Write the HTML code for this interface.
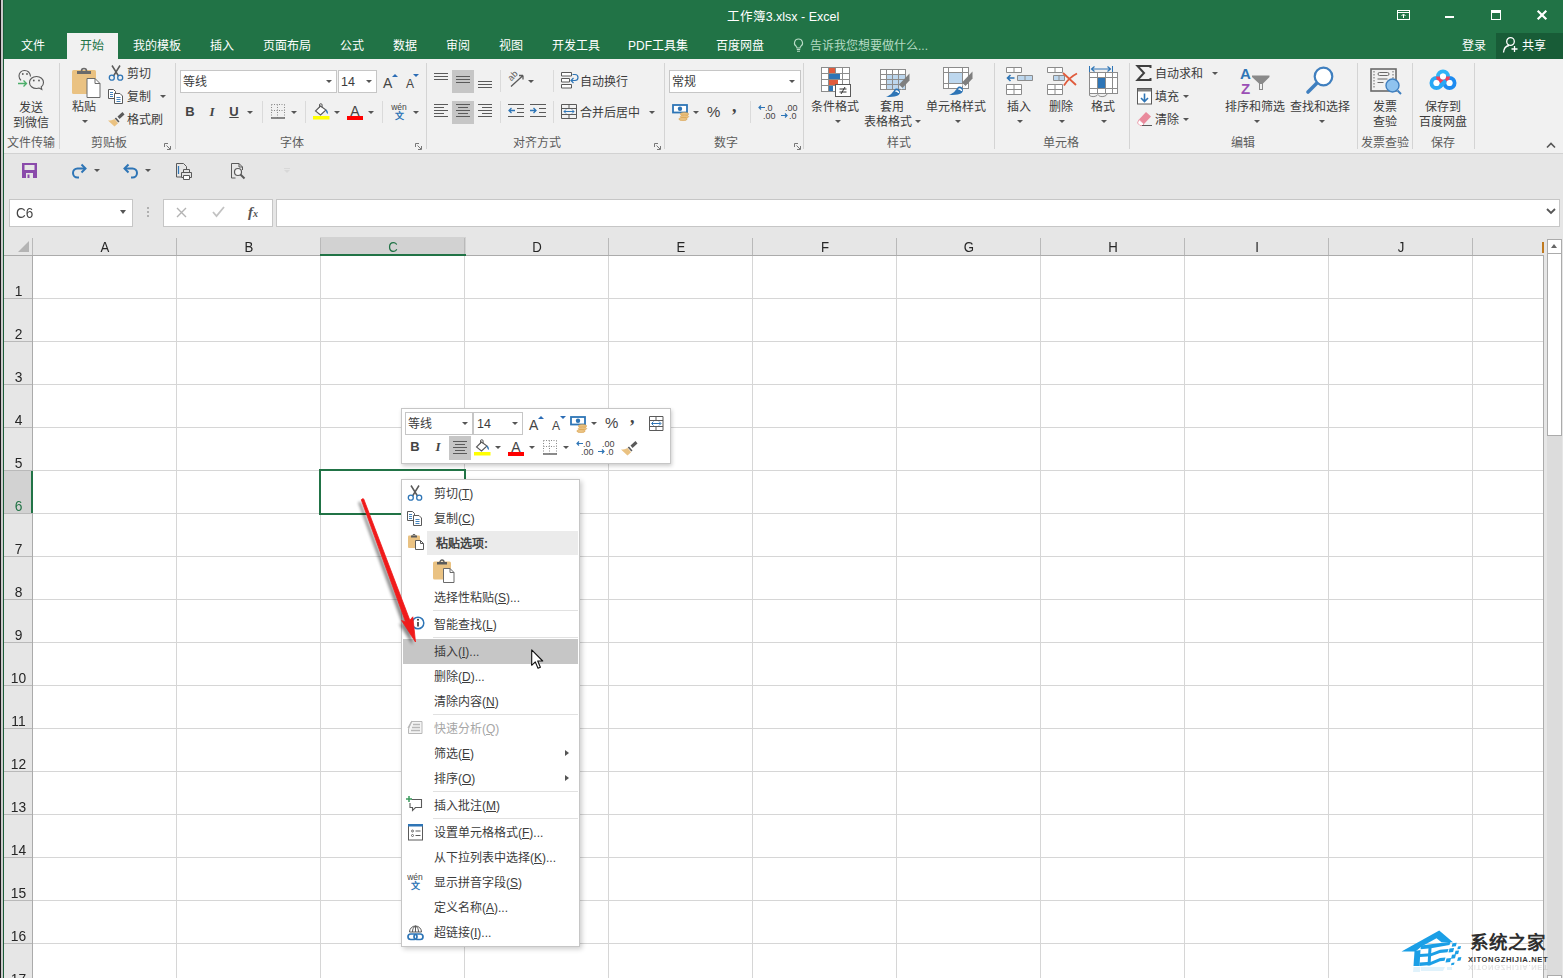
<!DOCTYPE html><html lang="zh-CN"><head>
<meta charset="utf-8">
<title>工作簿3.xlsx - Excel</title>
<style>
*{box-sizing:border-box;margin:0;padding:0}
html,body{width:1563px;height:978px;overflow:hidden;background:#fff}
body{position:relative;font-family:"Liberation Sans",sans-serif;font-size:12px;color:#3c3c3c}
.a{position:absolute;white-space:nowrap}
.t{position:absolute;white-space:nowrap;line-height:14px;height:14px;margin-top:1px}
.c{text-align:center}
svg{position:absolute;overflow:visible}
/* chrome */
#edge0{left:0;top:0;width:1px;height:978px;background:#1a1a1a}
#edge1{left:1px;top:0;width:2px;height:978px;background:#c9c9c9}
#edge2{left:3px;top:0;width:1px;height:978px;background:#1a5c38}
#title{left:4px;top:0;width:1559px;height:59px;background:#217346}
#ribbon{left:4px;top:59px;width:1559px;height:95px;background:#f1f1f1;border-bottom:1px solid #d2d2d2}
#qat{left:4px;top:154px;width:1559px;height:83px;background:#e6e6e6}
.tab{color:#fff;font-size:12px;top:38px}
.sep{position:absolute;width:1px;background:#d4d4d4}
.glab{color:#5a5a5a;top:136px}
.dd{position:absolute;width:0;height:0;border-left:3px solid transparent;border-right:3px solid transparent;border-top:3px solid #555}
/* grid */
#grid{left:33px;top:256px;width:1510px;height:722px;background:#fff}
.vl{position:absolute;top:256px;width:1px;height:722px;background:#d6d6d6}
.hl{position:absolute;left:33px;height:1px;width:1510px;background:#d6d6d6}
.ch{position:absolute;transform:scaleX(.88);top:238px;height:18px;font-size:15px;line-height:18px;text-align:center;width:144px}
.chs{position:absolute;top:243px;height:10px;width:1px;background:#b5b5b5}
.rh{position:absolute;transform:scaleX(.92);left:5px;width:27px;margin-top:2px;text-align:center;font-size:15px;line-height:16px;color:#262626}
.rhl{position:absolute;left:4px;width:28px;height:1px;background:#b9b9b9}
/* menu */
#menu{left:401px;top:479px;width:179px;height:468px;background:#fff;border:1px solid #c6c6c6;box-shadow:2px 2px 5px rgba(0,0,0,.2)}
.mi{position:absolute;left:434px;font-size:12px;line-height:14px;white-space:nowrap}
.msep{position:absolute;left:433px;width:145px;height:1px;background:#e1e1e1}
u{text-decoration:underline}
#mini{left:401px;top:408px;width:270px;height:56px;background:#fff;border:1px solid #c6c6c6;box-shadow:1px 2px 4px rgba(0,0,0,.2)}
</style>
</head>
<body>
<div class="a" id="title"></div>
<div class="a" id="ribbon"></div>
<div class="a" id="qat"></div>
<div class="a" id="edge0"></div><div class="a" id="edge1"></div><div class="a" id="edge2"></div>

<!--TITLEBAR-->
<div class="a" style="left:67px;top:33px;width:51px;height:26px;background:#f1f1f1"></div>
<div class="t" style="left: 80px; top: 38px; width: 24px; color: rgb(33, 115, 70); text-align: justify; text-align-last: justify;">开始</div>
<div class="t tab" style="left: 21px; width: 24px; text-align: justify; text-align-last: justify;">文件</div>
<div class="t tab" style="left: 133px; width: 48px; text-align: justify; text-align-last: justify;">我的模板</div>
<div class="t tab" style="left: 210px; width: 24px; text-align: justify; text-align-last: justify;">插入</div>
<div class="t tab" style="left: 263px; width: 48px; text-align: justify; text-align-last: justify;">页面布局</div>
<div class="t tab" style="left: 340px; width: 24px; text-align: justify; text-align-last: justify;">公式</div>
<div class="t tab" style="left: 393px; width: 24px; text-align: justify; text-align-last: justify;">数据</div>
<div class="t tab" style="left: 446px; width: 24px; text-align: justify; text-align-last: justify;">审阅</div>
<div class="t tab" style="left: 499px; width: 24px; text-align: justify; text-align-last: justify;">视图</div>
<div class="t tab" style="left: 552px; width: 48px; text-align: justify; text-align-last: justify;">开发工具</div>
<div class="t tab" style="left: 628px; width: 60px; text-align: justify; text-align-last: justify;">PDF工具集</div>
<div class="t tab" style="left: 716px; width: 48px; text-align: justify; text-align-last: justify;">百度网盘</div>
<div class="t" style="left: 726.67px; top: 9px; width: 112.65px; color: rgb(255, 255, 255); font-size: 12.5px; text-align: justify; text-align-last: justify;">工作簿3.xlsx - Excel</div>
<svg style="left:793px;top:38px" width="11" height="15" viewBox="0 0 11 15"><path d="M5.5 1a4 4 0 0 0-2.3 7.3c.5.5.8 1 .8 1.700h3c0-.7.3-1.200.8-1.700A4 4 0 0 0 5.500 1z" fill="none" stroke="#b9dcc7" stroke-width="1.100"></path><path d="M3.800 11.500h3.400M4 13.200h3" stroke="#b9dcc7" stroke-width="1.100"></path></svg>
<div class="t" style="left: 810px; top: 38px; color: rgb(180, 219, 195); width: 118.02px; text-align: justify; text-align-last: justify;">告诉我您想要做什么...</div>
<div class="t" style="left: 1462px; top: 38px; width: 24px; color: rgb(255, 255, 255); text-align: justify; text-align-last: justify;">登录</div>
<div class="a" style="left:1496px;top:33px;width:67px;height:26px;background:#185c37"></div>
<svg style="left:1502px;top:36px" width="18" height="18" viewBox="0 0 18 18"><circle cx="8.500" cy="5.500" r="3.800" fill="none" stroke="#fff" stroke-width="1.300"></circle><path d="M1.500 16.500c.3-4 2.500-6.500 5.500-7" fill="none" stroke="#fff" stroke-width="1.300"></path><path d="M12.500 10v6M9.500 13h6" stroke="#fff" stroke-width="1.300"></path></svg>
<div class="t" style="left: 1522px; top: 38px; color: rgb(255, 255, 255); width: 24px; text-align: justify; text-align-last: justify;">共享</div>
<svg style="left:1397px;top:10px" width="14" height="11" viewBox="0 0 14 11"><rect x=".5" y=".5" width="12" height="9" fill="none" stroke="#fff"></rect><path d="M.5 2.500h12" stroke="#fff"></path><path d="M6.500 8V4.500M4.500 6l2-2 2 2" fill="none" stroke="#fff"></path></svg>
<div class="a" style="left:1445px;top:16px;width:9px;height:2px;background:#fff"></div>
<div class="a" style="left:1491px;top:10px;width:10px;height:10px;border:1px solid #fff;border-top-width:3px"></div>
<svg style="left:1537px;top:10px" width="10" height="10" viewBox="0 0 10 10"><path d="M.7.700l8.600 8.600M9.300.700L.7 9.300" stroke="#fff" stroke-width="2.200"></path></svg>
<!--RIBBON-->
<div class="sep" style="left:59px;top:63px;height:86px"></div>
<div class="sep" style="left:175px;top:63px;height:86px"></div>
<div class="sep" style="left:426px;top:63px;height:86px"></div>
<div class="sep" style="left:664px;top:63px;height:86px"></div>
<div class="sep" style="left:803px;top:63px;height:86px"></div>
<div class="sep" style="left:994px;top:63px;height:86px"></div>
<div class="sep" style="left:1129px;top:63px;height:86px"></div>
<div class="sep" style="left:1357px;top:63px;height:86px"></div>
<div class="sep" style="left:1412px;top:63px;height:86px"></div>
<div class="sep" style="left:1474px;top:63px;height:86px"></div>
<div class="sep" style="left:262px;top:101px;height:22px;background:#dadada"></div>
<div class="sep" style="left:305px;top:101px;height:22px;background:#dadada"></div>
<div class="sep" style="left:382px;top:101px;height:22px;background:#dadada"></div>
<div class="sep" style="left:500px;top:70px;height:22px;background:#dadada"></div>
<div class="sep" style="left:500px;top:101px;height:22px;background:#dadada"></div>
<div class="sep" style="left:553px;top:70px;height:22px;background:#dadada"></div>
<div class="sep" style="left:553px;top:101px;height:22px;background:#dadada"></div>
<div class="sep" style="left:750px;top:101px;height:22px;background:#dadada"></div>
<div class="t" style="left: 7px; top: 135px; width: 48px; color: rgb(92, 92, 92); text-align: justify; text-align-last: justify;">文件传输</div>
<div class="t" style="left: 91px; top: 135px; width: 36px; color: rgb(92, 92, 92); text-align: justify; text-align-last: justify;">剪贴板</div>
<div class="t" style="left: 280px; top: 135px; width: 24px; color: rgb(92, 92, 92); text-align: justify; text-align-last: justify;">字体</div>
<div class="t" style="left: 513px; top: 135px; width: 48px; color: rgb(92, 92, 92); text-align: justify; text-align-last: justify;">对齐方式</div>
<div class="t" style="left: 714px; top: 135px; width: 24px; color: rgb(92, 92, 92); text-align: justify; text-align-last: justify;">数字</div>
<div class="t" style="left: 887px; top: 135px; width: 24px; color: rgb(92, 92, 92); text-align: justify; text-align-last: justify;">样式</div>
<div class="t" style="left: 1043px; top: 135px; width: 36px; color: rgb(92, 92, 92); text-align: justify; text-align-last: justify;">单元格</div>
<div class="t" style="left: 1231px; top: 135px; width: 24px; color: rgb(92, 92, 92); text-align: justify; text-align-last: justify;">编辑</div>
<div class="t" style="left: 1361px; top: 135px; width: 48px; color: rgb(92, 92, 92); text-align: justify; text-align-last: justify;">发票查验</div>
<div class="t" style="left: 1431px; top: 135px; width: 24px; color: rgb(92, 92, 92); text-align: justify; text-align-last: justify;">保存</div>
<svg style="left:164px;top:143px" width="7" height="7" viewBox="0 0 7 7"><path d="M.5 4V.5H4" fill="none" stroke="#777"></path><path d="M2.500 2.500L6 6M6.500 3v3.500H3" fill="none" stroke="#777"></path></svg>
<svg style="left:415px;top:143px" width="7" height="7" viewBox="0 0 7 7"><path d="M.5 4V.5H4" fill="none" stroke="#777"></path><path d="M2.500 2.500L6 6M6.500 3v3.500H3" fill="none" stroke="#777"></path></svg>
<svg style="left:654px;top:143px" width="7" height="7" viewBox="0 0 7 7"><path d="M.5 4V.5H4" fill="none" stroke="#777"></path><path d="M2.500 2.500L6 6M6.500 3v3.500H3" fill="none" stroke="#777"></path></svg>
<svg style="left:794px;top:143px" width="7" height="7" viewBox="0 0 7 7"><path d="M.5 4V.5H4" fill="none" stroke="#777"></path><path d="M2.500 2.500L6 6M6.500 3v3.500H3" fill="none" stroke="#777"></path></svg>
<div class="t" style="left: 19px; top: 100px; width: 24px; text-align: justify; text-align-last: justify;">发送</div>
<div class="t" style="left: 13px; top: 115px; width: 36px; text-align: justify; text-align-last: justify;">到微信</div>
<div class="t" style="left: 72px; top: 99px; width: 24px; text-align: justify; text-align-last: justify;">粘贴</div>
<div class="dd" style="left:82px;top:120px;border-top-color:#555"></div>
<div class="t" style="left: 127px; top: 66px; width: 24px; text-align: justify; text-align-last: justify;">剪切</div>
<div class="t" style="left: 127px; top: 89px; width: 24px; text-align: justify; text-align-last: justify;">复制</div>
<div class="dd" style="left:160px;top:95px;border-top-color:#555"></div>
<div class="t" style="left: 127px; top: 112px; width: 36px; text-align: justify; text-align-last: justify;">格式刷</div>
<div class="a" style="left:180px;top:70px;width:157px;height:23px;background:#fff;border:1px solid #c6c6c6"></div>
<div class="a" style="left:338px;top:70px;width:39px;height:23px;background:#fff;border:1px solid #c6c6c6"></div>
<div class="t" style="left: 183px; top: 74px; width: 24px; text-align: justify; text-align-last: justify;">等线</div>
<div class="t" style="left:341px;top:74px;font-size:12.500px">14</div>
<div class="dd" style="left:326px;top:80px;border-top-color:#555"></div>
<div class="dd" style="left:366px;top:80px;border-top-color:#555"></div>
<div class="t" style="left:383px;top:75px;font-size:14px;color:#444">A</div><div class="a" style="left:392px;top:74px;width:0;height:0;border-left:3px solid transparent;border-right:3px solid transparent;border-bottom:3.500px solid #2b6cb5"></div>
<div class="t" style="left:406px;top:76px;font-size:12px;color:#444">A</div><div class="a" style="left:413px;top:74px;width:0;height:0;border-left:3px solid transparent;border-right:3px solid transparent;border-top:3.500px solid #2b6cb5"></div>
<div class="t c" style="left:180px;top:104px;width:20px;font-weight:bold;font-size:13px;color:#444">B</div>
<div class="t c" style="left:202px;top:104px;width:20px;font-style:italic;font-size:13px;color:#444;font-family:'Liberation Serif',serif;font-weight:bold">I</div>
<div class="t c" style="left:224px;top:104px;width:20px;font-size:13px;color:#444;text-decoration:underline;font-weight:bold">U</div>
<div class="dd" style="left:247px;top:111px;border-top-color:#555"></div>
<div class="dd" style="left:291px;top:111px;border-top-color:#555"></div>
<div class="dd" style="left:334px;top:111px;border-top-color:#555"></div>
<div class="dd" style="left:368px;top:111px;border-top-color:#555"></div>
<div class="dd" style="left:413px;top:111px;border-top-color:#555"></div>
<div class="a" style="left:452px;top:70px;width:22px;height:23px;background:#c6c6c6"></div>
<div class="a" style="left:452px;top:101px;width:22px;height:23px;background:#c6c6c6"></div>
<div class="dd" style="left:528px;top:80px;border-top-color:#555"></div>
<div class="t" style="left: 580px; top: 74px; width: 48px; text-align: justify; text-align-last: justify;">自动换行</div>
<div class="t" style="left: 580px; top: 105px; width: 60px; text-align: justify; text-align-last: justify;">合并后居中</div>
<div class="dd" style="left:649px;top:111px;border-top-color:#555"></div>
<div class="a" style="left:669px;top:70px;width:132px;height:23px;background:#fff;border:1px solid #c6c6c6"></div>
<div class="t" style="left: 672px; top: 74px; width: 24px; text-align: justify; text-align-last: justify;">常规</div>
<div class="dd" style="left:789px;top:80px;border-top-color:#555"></div>
<div class="dd" style="left:693px;top:111px;border-top-color:#555"></div>
<div class="t" style="left:707px;top:104px;font-size:15px;color:#444">%</div>
<div class="t" style="left:732px;top:98px;font-size:18px;font-weight:bold;color:#444;font-family:'Liberation Serif',serif">,</div>
<div class="t" style="left: 811px; top: 99px; width: 48px; text-align: justify; text-align-last: justify;">条件格式</div>
<div class="dd" style="left:835px;top:120px;border-top-color:#555"></div>
<div class="t" style="left: 880px; top: 99px; width: 24px; text-align: justify; text-align-last: justify;">套用</div>
<div class="t" style="left: 864px; top: 114px; width: 48px; text-align: justify; text-align-last: justify;">表格格式</div>
<div class="dd" style="left:915px;top:120px;border-top-color:#555"></div>
<div class="t" style="left: 926px; top: 99px; width: 60px; text-align: justify; text-align-last: justify;">单元格样式</div>
<div class="dd" style="left:955px;top:120px;border-top-color:#555"></div>
<div class="t" style="left: 1007px; top: 99px; width: 24px; text-align: justify; text-align-last: justify;">插入</div>
<div class="dd" style="left:1017px;top:120px;border-top-color:#555"></div>
<div class="t" style="left: 1049px; top: 99px; width: 24px; text-align: justify; text-align-last: justify;">删除</div>
<div class="dd" style="left:1059px;top:120px;border-top-color:#555"></div>
<div class="t" style="left: 1091px; top: 99px; width: 24px; text-align: justify; text-align-last: justify;">格式</div>
<div class="dd" style="left:1101px;top:120px;border-top-color:#555"></div>
<div class="t" style="left: 1155px; top: 66px; width: 48px; text-align: justify; text-align-last: justify;">自动求和</div>
<div class="dd" style="left:1212px;top:72px;border-top-color:#555"></div>
<div class="t" style="left: 1155px; top: 89px; width: 24px; text-align: justify; text-align-last: justify;">填充</div>
<div class="dd" style="left:1183px;top:95px;border-top-color:#555"></div>
<div class="t" style="left: 1155px; top: 112px; width: 24px; text-align: justify; text-align-last: justify;">清除</div>
<div class="dd" style="left:1183px;top:118px;border-top-color:#555"></div>
<div class="t" style="left: 1225px; top: 99px; width: 60px; text-align: justify; text-align-last: justify;">排序和筛选</div>
<div class="dd" style="left:1254px;top:120px;border-top-color:#555"></div>
<div class="t" style="left: 1290px; top: 99px; width: 60px; text-align: justify; text-align-last: justify;">查找和选择</div>
<div class="dd" style="left:1319px;top:120px;border-top-color:#555"></div>
<div class="t" style="left: 1373px; top: 99px; width: 24px; text-align: justify; text-align-last: justify;">发票</div>
<div class="t" style="left: 1373px; top: 114px; width: 24px; text-align: justify; text-align-last: justify;">查验</div>
<div class="t" style="left: 1425px; top: 99px; width: 36px; text-align: justify; text-align-last: justify;">保存到</div>
<div class="t" style="left: 1419px; top: 114px; width: 48px; text-align: justify; text-align-last: justify;">百度网盘</div>
<svg style="left:1546px;top:142px" width="10" height="6" viewBox="0 0 10 6"><path d="M1 5.500l4-4 4 4" fill="none" stroke="#555" stroke-width="1.600"></path></svg>
<svg style="left:18px;top:69px" width="27" height="23" viewBox="0 0 27 23"><path d="M12.500 7.500C12 3.500 9.500 1.500 6.500 1.500 3.200 1.500 1 4 1 7c0 1.800.8 3.200 2 4.300" fill="none" stroke="#5a5a5a" stroke-width="1.100"></path><circle cx="4.800" cy="5" r=".9" fill="#5a5a5a"></circle><circle cx="9" cy="5" r=".9" fill="#5a5a5a"></circle><path d="M18.500 7.500c-4 0-7 2.600-7 6s3 6 7 6c.9 0 1.800-.1 2.600-.4l2.700 1.400-.6-2.500c1.500-1.100 2.300-2.700 2.300-4.500 0-3.400-3-6-7-6z" fill="#f1f1f1" stroke="#5a5a5a" stroke-width="1.100"></path><circle cx="15.800" cy="11.500" r=".9" fill="#5a5a5a"></circle><circle cx="21" cy="11.500" r=".9" fill="#5a5a5a"></circle><path d="M0 14.500h8M5.500 11.500l3 3-3 3" fill="none" stroke="#4caf6a" stroke-width="1.300"></path></svg>
<svg style="left:72px;top:66px" width="29" height="32" viewBox="0 0 29 32"><rect x="0" y="4" width="24" height="24" rx="1.500" fill="#eac282"></rect><path d="M5 5h14v3H5z" fill="#6a6a6a"></path><path d="M9.500 5a2.500 2.500 0 0 1 5 0" fill="none" stroke="#6a6a6a" stroke-width="1.600"></path><path d="M15 12.500h8l5 5V31.500H15z" fill="#fff" stroke="#6a6a6a" stroke-width="1"></path><path d="M23 12.500v5h5" fill="none" stroke="#6a6a6a"></path></svg>
<svg style="left:108px;top:65px" width="16" height="16" viewBox="0 0 16 16"><path d="M4 .5l6.500 10.500M12 .5L5.500 11" stroke="#5a5a5a" stroke-width="1.500" fill="none"></path><circle cx="3.800" cy="12.700" r="2.500" fill="none" stroke="#2e75b6" stroke-width="1.300"></circle><circle cx="12.200" cy="12.700" r="2.500" fill="none" stroke="#2e75b6" stroke-width="1.300"></circle></svg>
<svg style="left:108px;top:89px" width="16" height="15" viewBox="0 0 16 15"><path d="M.5.500h5l2 2V9.500h-7z" fill="#fff" stroke="#5a5a5a"></path><path d="M2 3.500h3M2 5.500h3M2 7.500h3" stroke="#2e75b6" stroke-width=".9"></path><path d="M6.500 4.500h5.500l2.500 2.500V14.500h-8z" fill="#fff" stroke="#5a5a5a"></path><path d="M8.500 8.500h4M8.500 10.500h4M8.500 12.500h4" stroke="#2e75b6" stroke-width=".9"></path></svg>
<svg style="left:108px;top:111px" width="17" height="16" viewBox="0 0 17 16"><path d="M9.500 5.500l5-4.500 2 2.500-5 4.500z" fill="#5a5a5a"></path><path d="M8 6.500l3.500 4-1.200 1.100-3.600-4z" fill="#5a5a5a"></path><path d="M6.500 8l3.600 4.200L6.500 15.500 0 9.500c2.500 0 4.500-.2 6.500-1.500z" fill="#eac282"></path></svg>
<svg style="left:271px;top:104px" width="14" height="15" viewBox="0 0 14 15"><path d="M.5.500h13M.5 6.500h13M.5.500v13M6.500.500v13M13.500.500v13" stroke="#8a8a8a" stroke-dasharray="1 1.500" fill="none"></path><path d="M0 14h14" stroke="#5a5a5a" stroke-width="1.400"></path></svg>
<svg style="left:313px;top:103px" width="17" height="17" viewBox="0 0 17 17"><rect x="0" y="13" width="16.500" height="3.500" fill="#ffff00"></rect><path d="M7.500 3L2.500 8l5 4 5.500-5z" fill="#fff" stroke="#5a5a5a" stroke-width="1.100"></path><path d="M6.500 4.500V2a1.300 1.300 0 0 1 2.600 0v2.500" fill="none" stroke="#5a5a5a" stroke-width="1"></path><path d="M12.500 6.500c1.800.5 2.800 2 2.300 4.500-1-.2-1.600-1.800-2.300-4.500z" fill="#2e75b6"></path></svg>
<div class="t c" style="left:345px;top:103px;width:20px;font-size:14px;color:#444">A</div><div class="a" style="left:347px;top:116px;width:16px;height:4px;background:#ff0000"></div>
<div class="t c" style="left:384px;top:101px;width:30px;font-size:8.500px;color:#444;line-height:10px">wén</div><div class="t" style="left: 394.5px; top: 109px; width: 9px; font-size: 9px; color: rgb(46, 117, 182); line-height: 12px; font-weight: bold; text-align: justify; text-align-last: justify;">文</div>
<svg style="left:434px;top:73px" width="14" height="9" viewBox="0 0 14 9"><path d="M0 0.5h14" stroke="#5a5a5a"></path><path d="M0 3.5h14" stroke="#5a5a5a"></path><path d="M0 6.5h14" stroke="#5a5a5a"></path></svg>
<svg style="left:456px;top:76px" width="14" height="9" viewBox="0 0 14 9"><path d="M0 0.5h14" stroke="#5a5a5a"></path><path d="M0 3.5h14" stroke="#5a5a5a"></path><path d="M0 6.5h14" stroke="#5a5a5a"></path></svg>
<svg style="left:478px;top:81px" width="14" height="9" viewBox="0 0 14 9"><path d="M0 0.5h14" stroke="#5a5a5a"></path><path d="M0 3.5h14" stroke="#5a5a5a"></path><path d="M0 6.5h14" stroke="#5a5a5a"></path></svg>
<svg style="left:434px;top:104px" width="14" height="15" viewBox="0 0 14 15"><path d="M0 0.5h14" stroke="#5a5a5a"></path><path d="M0 3.5h10" stroke="#5a5a5a"></path><path d="M0 6.5h14" stroke="#5a5a5a"></path><path d="M0 9.5h10" stroke="#5a5a5a"></path><path d="M0 12.5h14" stroke="#5a5a5a"></path></svg>
<svg style="left:456px;top:104px" width="14" height="15" viewBox="0 0 14 15"><path d="M0.0 0.5h14" stroke="#5a5a5a"></path><path d="M2.0 3.5h10" stroke="#5a5a5a"></path><path d="M0.0 6.5h14" stroke="#5a5a5a"></path><path d="M2.0 9.5h10" stroke="#5a5a5a"></path><path d="M0.0 12.5h14" stroke="#5a5a5a"></path></svg>
<svg style="left:478px;top:104px" width="14" height="15" viewBox="0 0 14 15"><path d="M0 0.5h14" stroke="#5a5a5a"></path><path d="M4 3.5h10" stroke="#5a5a5a"></path><path d="M0 6.5h14" stroke="#5a5a5a"></path><path d="M4 9.5h10" stroke="#5a5a5a"></path><path d="M0 12.5h14" stroke="#5a5a5a"></path></svg>
<svg style="left:508px;top:71px" width="18" height="18" viewBox="0 0 18 18"><text x="3" y="8" font-size="9" font-family="Liberation Sans" fill="#5a5a5a" transform="rotate(-45 6 9)">ab</text><path d="M3 15.500L15 4.500M15 4.500h-4M15 4.500v4" stroke="#5a5a5a" stroke-width="1.300" fill="none"></path></svg>
<svg style="left:561px;top:72px" width="17" height="17" viewBox="0 0 17 17"><path d="M.5.500h10v3.500H.5zM.5 6.500h8v3.500h-8zM.5 12.500h10v3.500H.5z" fill="#fff" stroke="#5a5a5a"></path><path d="M11.500 2.500h2.500a2.200 2.200 0 0 1 0 6h-3.500M12.500 6l-2.500 2.500 2.500 2.500" fill="none" stroke="#2e75b6" stroke-width="1.200"></path></svg>
<svg style="left:508px;top:104px" width="17" height="15" viewBox="0 0 17 15"><path d="M0 .5h16M9 4.500h7M9 8.500h7M0 12.500h16" stroke="#5a5a5a"></path><path d="M7 6.500H1M3.500 4L1 6.500 3.500 9" fill="none" stroke="#2e75b6" stroke-width="1.300"></path></svg>
<svg style="left:530px;top:104px" width="17" height="15" viewBox="0 0 17 15"><path d="M0 .5h16M9 4.500h7M9 8.500h7M0 12.500h16" stroke="#5a5a5a"></path><path d="M0 6.500h6M3.500 4L6 6.500 3.500 9" fill="none" stroke="#2e75b6" stroke-width="1.300"></path></svg>
<svg style="left:561px;top:104px" width="17" height="16" viewBox="0 0 17 16"><path d="M.5.500h15v14H.5zM.5 4.500h15M.5 10.500h15M8 .5v4M8 10.500v4" fill="none" stroke="#5a5a5a"></path><path d="M3 7.500h10M5 5.500L3 7.500l2 2M11 5.500l2 2-2 2" fill="none" stroke="#2e75b6" stroke-width="1"></path></svg>
<svg style="left:672px;top:104px" width="18" height="20" viewBox="0 0 18 20"><rect x="1" y="1" width="14" height="7.500" fill="#fff" stroke="#2e75b6" stroke-width="1.800"></rect><circle cx="8" cy="4.800" r="2.200" fill="#2e75b6"></circle><ellipse cx="12.500" cy="10" rx="4.200" ry="1.600" fill="#eac282" stroke="#d9a04a" stroke-width=".6"></ellipse><ellipse cx="12.500" cy="12.500" rx="4.200" ry="1.600" fill="#eac282" stroke="#d9a04a" stroke-width=".6"></ellipse><ellipse cx="11" cy="15" rx="4.200" ry="1.600" fill="#eac282" stroke="#d9a04a" stroke-width=".6"></ellipse></svg>
<div class="t" style="left:765px;top:103px;font-size:9px;line-height:8px;color:#444">.0</div><div class="t" style="left:763px;top:111px;font-size:9px;line-height:8px;color:#444">.00</div>
<svg style="left:758px;top:105px" width="8" height="6" viewBox="0 0 8 6"><path d="M7 2.500H1M3 .5L1 2.500l2 2" fill="none" stroke="#2e75b6" stroke-width="1.200"></path></svg>
<div class="t" style="left:785px;top:103px;font-size:9px;line-height:8px;color:#444">.00</div><div class="t" style="left:789px;top:111px;font-size:9px;line-height:8px;color:#444">.0</div>
<svg style="left:781px;top:113px" width="8" height="6" viewBox="0 0 8 6"><path d="M0 2.500h6M4 .5l2 2-2 2" fill="none" stroke="#2e75b6" stroke-width="1.200"></path></svg>
<svg style="left:821px;top:67px" width="31" height="31" viewBox="0 0 31 31"><rect x=".5" y=".5" width="28" height="24" fill="#fff" stroke="#8c8c8c"></rect><path d="M7.500.5v24M14.500.5v24M21.500.5v24M.5 6.500h28M.5 12.500h28M.5 18.500h28" stroke="#8c8c8c" fill="none"></path><rect x="8" y="1" width="6" height="5" fill="#e05b3c"></rect><rect x="8" y="7" width="11" height="5" fill="#2e75b6"></rect><rect x="8" y="13" width="9" height="5" fill="#e05b3c"></rect><rect x="8" y="19" width="4" height="5" fill="#2e75b6"></rect><rect x="14.500" y="17.500" width="15" height="12" fill="#fff" stroke="#5a5a5a"></rect><path d="M18.500 22h7M18.500 25h7M24 20l-4 7" stroke="#333" stroke-width="1" fill="none"></path></svg>
<svg style="left:880px;top:69px" width="31" height="29" viewBox="0 0 31 29"><rect x=".5" y=".5" width="25" height="20" fill="#fff" stroke="#8c8c8c"></rect><rect x="7" y="6" width="18" height="14" fill="#bdd7ee"></rect><path d="M6.500.5v20M12.500.5v20M18.500.5v20M.5 5.500h25M.5 10.500h25M.5 15.500h25" stroke="#8c8c8c" fill="none"></path><path d="M29.500 4.500L19 15.500l3.500 3.500 7-7.500z" fill="#7f7f7f"></path><path d="M19.500 17.500l2.500 2.500" stroke="#f1f1f1" stroke-width="1.200"></path><path d="M6 28c5-2 7-5 9-8 2.500-1.500 5.500.5 5 3.500-.8 3.500-4 4.500-14 4.500z" fill="#2e75b6"></path><path d="M15.500 22.500c1.500-1 3 0 3 1.500" stroke="#fff" stroke-width="1.500" fill="none"></path></svg>
<svg style="left:943px;top:67px" width="31" height="29" viewBox="0 0 31 29"><rect x=".5" y=".5" width="25" height="21" fill="#fff" stroke="#8c8c8c"></rect><path d="M5.500.5v21M19.500.5v21M.5 5.500h25M.5 16.500h25" stroke="#8c8c8c" fill="none"></path><rect x="6" y="6" width="13" height="10" fill="#bdd7ee"></rect><path d="M29.500 4.500L19 15.500l3.500 3.500 7-7.500z" fill="#7f7f7f"></path><path d="M19.500 17.500l2.500 2.500" stroke="#f1f1f1" stroke-width="1.200"></path><path d="M6 28c5-2 7-5 9-8 2.500-1.500 5.500.5 5 3.500-.8 3.500-4 4.500-14 4.500z" fill="#2e75b6"></path><path d="M15.500 22.500c1.500-1 3 0 3 1.500" stroke="#fff" stroke-width="1.500" fill="none"></path></svg>
<svg style="left:1006px;top:67px" width="27" height="28" viewBox="0 0 27 28"><path d="M.5.500h15v5H.5zM8 .5v5" fill="#fff" stroke="#8c8c8c"></path><path d="M11.500 8.500h15v5h-15z" fill="#bdd7ee" stroke="#8c8c8c"></path><path d="M19 8.500v5" stroke="#8c8c8c"></path><path d="M.5 17.500h15v10H.5zM8 17.500v10M.5 22.500h15" fill="#fff" stroke="#8c8c8c"></path><path d="M8.500 11H1.500M4.500 8L1.500 11l3 3" fill="none" stroke="#2e75b6" stroke-width="1.600"></path></svg>
<svg style="left:1047px;top:67px" width="31" height="28" viewBox="0 0 31 28"><path d="M.5.500h15v5H.5zM8 .5v5" fill="#fff" stroke="#8c8c8c"></path><path d="M6.500 8.500h11v5h-11z" fill="#bdd7ee" stroke="#8c8c8c"></path><path d="M12 8.500v5" stroke="#8c8c8c"></path><path d="M.5 17.500h15v10H.5zM8 17.500v10M.5 22.500h15" fill="#fff" stroke="#8c8c8c"></path><path d="M16 6l13 12M30 6.500c-6 3-10 7-13 12" fill="none" stroke="#e05b3c" stroke-width="1.800"></path></svg>
<svg style="left:1089px;top:65px" width="30" height="33" viewBox="0 0 30 33"><path d="M.5 1v6M23.500 1v6" stroke="#2e75b6"></path><path d="M2.500 4h19M5.500 1.500L2.500 4l3 2.500M18.500 1.500l3 2.500-3 2.500" fill="none" stroke="#2e75b6" stroke-width="1.200"></path><rect x=".5" y="7.500" width="28" height="21" fill="#fff" stroke="#8c8c8c"></rect><path d="M8.500 7.500v21M16.500 7.500v21M23.500 7.500v21M.5 12.500h28M.5 23.500h28" stroke="#8c8c8c" fill="none"></path><rect x="9" y="13" width="7" height="10" fill="#2e75b6"></rect><path d="M.5 28.500v2c2 1.500 5 1.500 7.500 0 1-.8 1-1.500 1.500-2M9.500 30.500c2 1.500 5 1.500 7.500 0l1.500-2" fill="none" stroke="#8c8c8c"></path></svg>
<svg style="left:1136px;top:65px" width="16" height="16" viewBox="0 0 16 16"><path d="M14.500 3V1H1.500l6.500 7-6.500 7h13v-2" fill="none" stroke="#404040" stroke-width="2"></path></svg>
<svg style="left:1137px;top:88px" width="15" height="17" viewBox="0 0 15 17"><rect x=".5" y=".5" width="14" height="15.500" fill="#fff" stroke="#5a5a5a"></rect><rect x="1" y="1" width="13" height="2.500" fill="#7f7f7f"></rect><path d="M7.500 5.500v8M4 10l3.500 3.500L11 10" fill="none" stroke="#2e75b6" stroke-width="1.600"></path></svg>
<svg style="left:1137px;top:111px" width="16" height="15" viewBox="0 0 16 15"><path d="M9 1l5 4.500-7 7.500-5-4.500z" fill="#e98a9c"></path><path d="M2 8.500l5 4.500-1.500 1.500H3L.5 12z" fill="#fff" stroke="#e98a9c" stroke-width=".8"></path><path d="M5 14.500h10" stroke="#5a5a5a"></path></svg>
<div class="t" style="left:1240px;top:65px;font-size:15px;line-height:15px;height:15px;font-weight:bold;color:#2e75b6">A</div><div class="t" style="left:1241px;top:80px;font-size:15px;line-height:15px;height:15px;font-weight:bold;color:#9b4fb5">Z</div>
<svg style="left:1252px;top:75px" width="18" height="16" viewBox="0 0 18 16"><path d="M0 .5h17.500v1.500L11 8.500V15H7V8.500L0 2z" fill="#8a8a8a"></path><path d="M8 9v5h2V9z" fill="#f1f1f1"></path></svg>
<svg style="left:1305px;top:65px" width="30" height="30" viewBox="0 0 30 30"><circle cx="18.500" cy="11.500" r="8.800" fill="#fff" stroke="#3f7fbf" stroke-width="2.200"></circle><path d="M11.500 18.500L3 27" stroke="#3f7fbf" stroke-width="3.600" stroke-linecap="round"></path></svg>
<svg style="left:1370px;top:68px" width="32" height="28" viewBox="0 0 32 28"><rect x="1" y="1" width="25" height="22" fill="#f1f1f1" stroke="#6a6a6a" stroke-width="1.600"></rect><path d="M4 3v18" stroke="#6a6a6a" stroke-dasharray="1.500 1.500"></path><path d="M23 3v8" stroke="#6a6a6a" stroke-dasharray="1.500 1.500"></path><rect x="8" y="4.500" width="11" height="3" rx="1.500" fill="none" stroke="#6a6a6a"></rect><path d="M7.500 11h10M7.500 14.500h6" stroke="#6a6a6a" stroke-width="1.200"></path><circle cx="22.500" cy="17.500" r="6.500" fill="#8fc3ef" stroke="#3f7fbf" stroke-width="1.400"></circle><path d="M27.500 22.500l3.500 3.500" stroke="#3f7fbf" stroke-width="2"></path></svg>
<svg style="left:1429px;top:69px" width="28" height="22" viewBox="0 0 28 22"><circle cx="7.500" cy="14" r="5" fill="none" stroke="#2aa8f5" stroke-width="4"></circle><circle cx="20.500" cy="14" r="5" fill="none" stroke="#1e8bf0" stroke-width="4"></circle><circle cx="14" cy="7.500" r="5" fill="none" stroke="#2fb4f7" stroke-width="4"></circle><path d="M9 7.500a5 5 0 0 0 10 0" fill="none" stroke="#f0405a" stroke-width="4"></path><path d="M11 17.500l6-6" stroke="#2aa8f5" stroke-width="4"></path><circle cx="7.500" cy="14" r="3" fill="#fff"></circle><circle cx="20.500" cy="14" r="3" fill="#fff"></circle><circle cx="14" cy="7.500" r="3" fill="#fff"></circle></svg>
<!--RIBBONICONS3-->
<!--QAT-->
<svg style="left:22px;top:163px" width="15" height="15" viewBox="0 0 15 15"><path d="M0 0h15v15H0z" fill="#8a4bab"></path><rect x="2.500" y="2" width="10" height="5" fill="#e6e6e6"></rect><rect x="4" y="10" width="7" height="5" fill="#e6e6e6"></rect><rect x="5.500" y="11.500" width="2" height="3.500" fill="#8a4bab"></rect></svg>
<svg style="left:71px;top:163px" width="16" height="15" viewBox="0 0 16 15"><path d="M14 5.500H6.500a4.500 4.500 0 0 0 0 9H8" fill="none" stroke="#2e75b6" stroke-width="2"></path><path d="M10.500 1.500l4 4-4 4" fill="none" stroke="#2e75b6" stroke-width="2"></path></svg>
<div class="dd" style="left:94px;top:169px;border-top-color:#555"></div>
<svg style="left:123px;top:163px" width="16" height="15" viewBox="0 0 16 15"><path d="M2 5.500h7.500a4.500 4.500 0 0 1 0 9H8" fill="none" stroke="#2e75b6" stroke-width="2"></path><path d="M5.500 1.500l-4 4 4 4" fill="none" stroke="#2e75b6" stroke-width="2"></path></svg>
<div class="dd" style="left:145px;top:169px;border-top-color:#555"></div>
<svg style="left:176px;top:163px" width="17" height="17" viewBox="0 0 17 17"><path d="M.5.500h7l3 3V6M.5.500v13.500h5" fill="none" stroke="#5a5a5a"></path><path d="M2.500 3v8" stroke="#2e75b6" stroke-width="1.200"></path><path d="M7.500 9.500V6.500h6v3M5.500 9.500h10v5h-10z" fill="#e6e6e6" stroke="#5a5a5a"></path><path d="M7.500 12.500h6v4h-6z" fill="#fff" stroke="#5a5a5a"></path></svg>
<svg style="left:231px;top:163px" width="15" height="17" viewBox="0 0 15 17"><path d="M.5.500h7.500l3.500 3.500v3M.5.500v14.500h4" fill="none" stroke="#5a5a5a"></path><path d="M8 .5v3.500h3.500" fill="none" stroke="#5a5a5a"></path><circle cx="7" cy="9" r="3.500" fill="#f4f4f4" stroke="#5a5a5a" stroke-width="1.200"></circle><path d="M9.500 11.500l4 4" stroke="#5a5a5a" stroke-width="2"></path></svg>
<div class="a" style="left:284px;top:168px;width:6px;height:1px;background:#d8d8d8"></div><div class="dd" style="left:284px;top:170px;border-top-color:#d8d8d8"></div>
<div class="a" style="left:9px;top:199px;width:124px;height:28px;background:#fff;border:1px solid #c6c6c6"></div>
<div class="t" style="left:16px;top:203px;font-size:15px;line-height:18px;height:18px;color:#444;transform:scaleX(.9);transform-origin:0 50%">C6</div>
<div class="a" style="left:120px;top:210px;width:0;height:0;border-left:3.500px solid transparent;border-right:3.500px solid transparent;border-top:4px solid #555"></div>
<div class="a" style="left:147px;top:207px;width:2px;height:2px;background:#b0b0b0;box-shadow:0 4px 0 #b0b0b0,0 8px 0 #b0b0b0"></div>
<div class="a" style="left:163px;top:199px;width:110px;height:28px;background:#fff;border:1px solid #c6c6c6"></div>
<svg style="left:176px;top:207px" width="11" height="11" viewBox="0 0 11 11"><path d="M1 1l9 9M10 1l-9 9" stroke="#b3b3b3" stroke-width="1.400"></path></svg>
<svg style="left:212px;top:206px" width="13" height="11" viewBox="0 0 13 11"><path d="M1 6l3.500 4L12 1" fill="none" stroke="#c2c2c2" stroke-width="1.800"></path></svg>
<div class="t" style="left:248px;top:203px;font-size:15px;line-height:16px;height:16px;font-family:'Liberation Serif',serif;font-style:italic;font-weight:bold;color:#555">f<span style="font-size:10px">x</span></div>
<div class="a" style="left:276px;top:199px;width:1284px;height:28px;background:#fff;border:1px solid #c6c6c6"></div>
<svg style="left:1546px;top:208px" width="10" height="7" viewBox="0 0 10 7"><path d="M1 1l4 4 4-4" fill="none" stroke="#555" stroke-width="1.800"></path></svg>
<!--GRID-->
<div class="a" style="left:4px;top:237px;width:1540px;height:19px;background:#e6e6e6"></div>
<div class="a" style="left:320px;top:237px;width:146px;height:19px;background:#d2d2d2"></div>
<div class="a" style="left:4px;top:256px;width:29px;height:722px;background:#e6e6e6"></div>
<div class="a" id="grid"></div>
<div class="a" style="left:4px;top:471px;width:29px;height:42px;background:#d2d2d2;border-right:2px solid #217346"></div>
<div class="ch" style="left:33px;color:#262626">A</div>
<div class="ch" style="left:177px;color:#262626">B</div>
<div class="ch" style="left:321px;color:#217346">C</div>
<div class="ch" style="left:465px;color:#262626">D</div>
<div class="ch" style="left:609px;color:#262626">E</div>
<div class="ch" style="left:753px;color:#262626">F</div>
<div class="ch" style="left:897px;color:#262626">G</div>
<div class="ch" style="left:1041px;color:#262626">H</div>
<div class="ch" style="left:1185px;color:#262626">I</div>
<div class="ch" style="left:1329px;color:#262626">J</div>
<div class="a" style="left:32px;top:238px;width:1px;height:17px;background:#b9b9b9"></div>
<div class="a" style="left:176px;top:238px;width:1px;height:17px;background:#b9b9b9"></div>
<div class="vl" style="left:176px"></div>
<div class="a" style="left:320px;top:238px;width:1px;height:17px;background:#b9b9b9"></div>
<div class="vl" style="left:320px"></div>
<div class="a" style="left:464px;top:238px;width:1px;height:17px;background:#b9b9b9"></div>
<div class="vl" style="left:464px"></div>
<div class="a" style="left:608px;top:238px;width:1px;height:17px;background:#b9b9b9"></div>
<div class="vl" style="left:608px"></div>
<div class="a" style="left:752px;top:238px;width:1px;height:17px;background:#b9b9b9"></div>
<div class="vl" style="left:752px"></div>
<div class="a" style="left:896px;top:238px;width:1px;height:17px;background:#b9b9b9"></div>
<div class="vl" style="left:896px"></div>
<div class="a" style="left:1040px;top:238px;width:1px;height:17px;background:#b9b9b9"></div>
<div class="vl" style="left:1040px"></div>
<div class="a" style="left:1184px;top:238px;width:1px;height:17px;background:#b9b9b9"></div>
<div class="vl" style="left:1184px"></div>
<div class="a" style="left:1328px;top:238px;width:1px;height:17px;background:#b9b9b9"></div>
<div class="vl" style="left:1328px"></div>
<div class="a" style="left:1472px;top:238px;width:1px;height:17px;background:#b9b9b9"></div>
<div class="vl" style="left:1472px"></div>
<div class="a" style="left:1542px;top:242px;width:1.500px;height:11px;background:#c07a20"></div>
<div class="a" style="left:4px;top:255px;width:1540px;height:1px;background:#ababab"></div>
<div class="a" style="left:32px;top:256px;width:1px;height:722px;background:#ababab"></div>
<div class="a" style="left:1543px;top:256px;width:1px;height:722px;background:#ababab"></div>
<svg style="left:18px;top:241px" width="12" height="11" viewBox="0 0 12 11"><path d="M11 0v11H0z" fill="#b4b4b4"></path></svg>
<div class="hl" style="top:298px"></div>
<div class="rhl" style="top:298px"></div>
<div class="rh" style="top:281px;color:#262626">1</div>
<div class="hl" style="top:341px"></div>
<div class="rhl" style="top:341px"></div>
<div class="rh" style="top:324px;color:#262626">2</div>
<div class="hl" style="top:384px"></div>
<div class="rhl" style="top:384px"></div>
<div class="rh" style="top:367px;color:#262626">3</div>
<div class="hl" style="top:427px"></div>
<div class="rhl" style="top:427px"></div>
<div class="rh" style="top:410px;color:#262626">4</div>
<div class="hl" style="top:470px"></div>
<div class="rhl" style="top:470px"></div>
<div class="rh" style="top:453px;color:#262626">5</div>
<div class="hl" style="top:513px"></div>
<div class="rhl" style="top:513px"></div>
<div class="rh" style="top:496px;color:#217346">6</div>
<div class="hl" style="top:556px"></div>
<div class="rhl" style="top:556px"></div>
<div class="rh" style="top:539px;color:#262626">7</div>
<div class="hl" style="top:599px"></div>
<div class="rhl" style="top:599px"></div>
<div class="rh" style="top:582px;color:#262626">8</div>
<div class="hl" style="top:642px"></div>
<div class="rhl" style="top:642px"></div>
<div class="rh" style="top:625px;color:#262626">9</div>
<div class="hl" style="top:685px"></div>
<div class="rhl" style="top:685px"></div>
<div class="rh" style="top:668px;color:#262626">10</div>
<div class="hl" style="top:728px"></div>
<div class="rhl" style="top:728px"></div>
<div class="rh" style="top:711px;color:#262626">11</div>
<div class="hl" style="top:771px"></div>
<div class="rhl" style="top:771px"></div>
<div class="rh" style="top:754px;color:#262626">12</div>
<div class="hl" style="top:814px"></div>
<div class="rhl" style="top:814px"></div>
<div class="rh" style="top:797px;color:#262626">13</div>
<div class="hl" style="top:857px"></div>
<div class="rhl" style="top:857px"></div>
<div class="rh" style="top:840px;color:#262626">14</div>
<div class="hl" style="top:900px"></div>
<div class="rhl" style="top:900px"></div>
<div class="rh" style="top:883px;color:#262626">15</div>
<div class="hl" style="top:943px"></div>
<div class="rhl" style="top:943px"></div>
<div class="rh" style="top:926px;color:#262626">16</div>
<div class="hl" style="top:986px"></div>
<div class="rhl" style="top:986px"></div>
<div class="rh" style="top:969px;color:#262626">17</div>
<div class="a" style="left:319px;top:469px;width:147px;height:46px;border:2px solid #217346"></div>
<div class="a" style="left:1544px;top:237px;width:19px;height:741px;background:#e6e6e6"></div>
<div class="a" style="left:1547px;top:254px;width:15px;height:724px;background:#dcdcdc"></div>
<div class="a" style="left:1547px;top:239px;width:15px;height:15px;background:#fff;border:1px solid #ababab"></div>
<div class="a" style="left:1551px;top:244px;width:0;height:0;border-left:3.500px solid transparent;border-right:3.500px solid transparent;border-bottom:4px solid #666"></div>
<div class="a" style="left:1547px;top:253px;width:15px;height:183px;background:#fff;border:1px solid #ababab"></div>
<div class="a" style="left:1547px;top:975px;width:15px;height:6px;background:#fff;border:1px solid #ababab"></div>
<div class="a" style="left:31px;top:471px;width:2px;height:42px;background:#217346"></div>
<div class="a" style="left:320px;top:254px;width:146px;height:2px;background:#217346"></div>
<!--MINI-->
<div class="a" id="mini"></div>
<div class="a" style="left:405px;top:412px;width:68px;height:23px;background:#fff;border:1px solid #c6c6c6"></div>
<div class="a" style="left:473px;top:412px;width:50px;height:23px;background:#fff;border:1px solid #c6c6c6"></div>
<div class="t" style="left: 408px; top: 416px; width: 24px; text-align: justify; text-align-last: justify;">等线</div>
<div class="dd" style="left:462px;top:422px;border-top-color:#555"></div>
<div class="t" style="left:477px;top:416px;font-size:12.500px">14</div>
<div class="dd" style="left:512px;top:422px;border-top-color:#555"></div>
<div class="t" style="left:529px;top:417px;font-size:14px;color:#444">A</div><div class="a" style="left:538px;top:416px;width:0;height:0;border-left:3px solid transparent;border-right:3px solid transparent;border-bottom:3.500px solid #2b6cb5"></div>
<div class="t" style="left:552px;top:418px;font-size:12px;color:#444">A</div><div class="a" style="left:560px;top:416px;width:0;height:0;border-left:3px solid transparent;border-right:3px solid transparent;border-top:3.500px solid #2b6cb5"></div>
<svg style="left:570px;top:416px" width="18" height="20" viewBox="0 0 18 20"><rect x="1" y="1" width="14" height="7.500" fill="#fff" stroke="#2e75b6" stroke-width="1.800"></rect><circle cx="8" cy="4.800" r="2.200" fill="#2e75b6"></circle><ellipse cx="12.500" cy="10" rx="4.200" ry="1.600" fill="#eac282" stroke="#d9a04a" stroke-width=".6"></ellipse><ellipse cx="12.500" cy="12.500" rx="4.200" ry="1.600" fill="#eac282" stroke="#d9a04a" stroke-width=".6"></ellipse><ellipse cx="11" cy="15" rx="4.200" ry="1.600" fill="#eac282" stroke="#d9a04a" stroke-width=".6"></ellipse></svg>
<div class="dd" style="left:591px;top:422px;border-top-color:#555"></div>
<div class="t" style="left:605px;top:415px;font-size:15px;color:#444">%</div>
<div class="t" style="left:630px;top:409px;font-size:18px;font-weight:bold;color:#444;font-family:'Liberation Serif',serif">,</div>
<svg style="left:649px;top:416px" width="15" height="16" viewBox="0 0 15 16"><path d="M.5.500h13.500v14H.5zM.5 4.500h13.500M.5 10.500h13.500M7 .5v4M7 10.500v4" fill="none" stroke="#5a5a5a"></path><path d="M3 7.500h8.500M4.500 5.500l-2 2 2 2M10 5.500l2 2-2 2" fill="none" stroke="#2e75b6" stroke-width="1"></path></svg>
<div class="t c" style="left:405px;top:439px;width:20px;font-weight:bold;font-size:13px;color:#444">B</div>
<div class="t c" style="left:428px;top:439px;width:20px;font-style:italic;font-size:13px;color:#444;font-family:'Liberation Serif',serif;font-weight:bold">I</div>
<div class="a" style="left:449px;top:436px;width:22px;height:24px;background:#c6c6c6"></div>
<svg style="left:453px;top:441px" width="14" height="15" viewBox="0 0 14 15"><path d="M0 .5h14M2 3.500h10M0 6.500h14M2 9.500h10M0 12.500h14" stroke="#5a5a5a"></path></svg>
<svg style="left:474px;top:439px" width="17" height="17" viewBox="0 0 17 17"><rect x="0" y="13" width="16.500" height="3.500" fill="#ffff00"></rect><path d="M7.500 3L2.500 8l5 4 5.500-5z" fill="#fff" stroke="#5a5a5a" stroke-width="1.100"></path><path d="M6.500 4.500V2a1.300 1.300 0 0 1 2.600 0v2.500" fill="none" stroke="#5a5a5a" stroke-width="1"></path><path d="M12.500 6.500c1.800.5 2.800 2 2.300 4.500-1-.2-1.600-1.800-2.300-4.500z" fill="#2e75b6"></path></svg>
<div class="dd" style="left:495px;top:446px;border-top-color:#555"></div>
<div class="t c" style="left:506px;top:439px;width:20px;font-size:14px;color:#444">A</div><div class="a" style="left:508px;top:452px;width:16px;height:4px;background:#ff0000"></div>
<div class="dd" style="left:529px;top:446px;border-top-color:#555"></div>
<svg style="left:543px;top:440px" width="14" height="15" viewBox="0 0 14 15"><path d="M.5.500h13M.5 6.500h13M.5.500v13M6.500.500v13M13.500.500v13" stroke="#8a8a8a" stroke-dasharray="1 1.500" fill="none"></path><path d="M0 14h14" stroke="#5a5a5a" stroke-width="1.400"></path></svg>
<div class="dd" style="left:563px;top:446px;border-top-color:#555"></div>
<div class="t" style="left:583px;top:439px;font-size:9px;line-height:8px;color:#444">.0</div><div class="t" style="left:581px;top:447px;font-size:9px;line-height:8px;color:#444">.00</div>
<svg style="left:576px;top:441px" width="8" height="6" viewBox="0 0 8 6"><path d="M7 2.500H1M3 .5L1 2.500l2 2" fill="none" stroke="#2e75b6" stroke-width="1.200"></path></svg>
<div class="t" style="left:602px;top:439px;font-size:9px;line-height:8px;color:#444">.00</div><div class="t" style="left:606px;top:447px;font-size:9px;line-height:8px;color:#444">.0</div>
<svg style="left:598px;top:449px" width="8" height="6" viewBox="0 0 8 6"><path d="M0 2.500h6M4 .5l2 2-2 2" fill="none" stroke="#2e75b6" stroke-width="1.200"></path></svg>
<svg style="left:621px;top:440px" width="17" height="16" viewBox="0 0 17 16"><path d="M9.500 5.500l5-4.500 2 2.500-5 4.500z" fill="#5a5a5a"></path><path d="M8 6.500l3.500 4-1.200 1.100-3.600-4z" fill="#5a5a5a"></path><path d="M6.500 8l3.600 4.200L6.500 15.500 0 9.500c2.500 0 4.500-.2 6.500-1.500z" fill="#eac282"></path></svg>
<!--MENU-->
<div class="a" id="menu"></div>
<div class="a" style="left:427px;top:531px;width:151px;height:24px;background:#ebebeb"></div>
<div class="a" style="left:403px;top:639px;width:175px;height:25px;background:#c6c6c6"></div>
<div class="t" style="left: 434px; top: 486px; width: 39.35px; text-align: justify; text-align-last: justify;">剪切(<u>T</u>)</div>
<div class="t" style="left: 434px; top: 511px; width: 40.68px; text-align: justify; text-align-last: justify;">复制(<u>C</u>)</div>
<div class="t" style="left: 434px; top: 590px; width: 86.02px; text-align: justify; text-align-last: justify;">选择性粘贴(<u>S</u>)...</div>
<div class="t" style="left: 434px; top: 617px; width: 62.69px; text-align: justify; text-align-last: justify;">智能查找(<u>L</u>)</div>
<div class="t" style="left: 434px; top: 644px; width: 45.35px; text-align: justify; text-align-last: justify;">插入(<u>I</u>)...</div>
<div class="t" style="left: 434px; top: 669px; width: 50.68px; text-align: justify; text-align-last: justify;">删除(<u>D</u>)...</div>
<div class="t" style="left: 434px; top: 694px; width: 64.68px; text-align: justify; text-align-last: justify;">清除内容(<u>N</u>)</div>
<div class="t" style="left: 434px; top: 746px; width: 40.02px; text-align: justify; text-align-last: justify;">筛选(<u>E</u>)</div>
<div class="t" style="left: 434px; top: 771px; width: 41.35px; text-align: justify; text-align-last: justify;">排序(<u>O</u>)</div>
<div class="t" style="left: 434px; top: 798px; width: 66px; text-align: justify; text-align-last: justify;">插入批注(<u>M</u>)</div>
<div class="t" style="left: 434px; top: 825px; width: 109.35px; text-align: justify; text-align-last: justify;">设置单元格格式(<u>F</u>)...</div>
<div class="t" style="left: 434px; top: 850px; width: 122.02px; text-align: justify; text-align-last: justify;">从下拉列表中选择(<u>K</u>)...</div>
<div class="t" style="left: 434px; top: 875px; width: 88.02px; text-align: justify; text-align-last: justify;">显示拼音字段(<u>S</u>)</div>
<div class="t" style="left: 434px; top: 900px; width: 74.02px; text-align: justify; text-align-last: justify;">定义名称(<u>A</u>)...</div>
<div class="t" style="left: 434px; top: 925px; width: 57.35px; text-align: justify; text-align-last: justify;">超链接(<u>I</u>)...</div>
<div class="t" style="left: 436px; top: 536px; font-weight: bold; color: rgb(68, 68, 68); width: 52px; text-align: justify; text-align-last: justify;">粘贴选项:</div>
<div class="t" style="left: 434px; top: 721px; color: rgb(166, 166, 166); width: 65.35px; text-align: justify; text-align-last: justify;">快速分析(<u>Q</u>)</div>
<div class="msep" style="top:610px"></div>
<div class="msep" style="top:637px"></div>
<div class="msep" style="top:714px"></div>
<div class="msep" style="top:791px"></div>
<div class="msep" style="top:818px"></div>
<div class="a" style="left:565px;top:750px;width:0;height:0;border-top:3.500px solid transparent;border-bottom:3.500px solid transparent;border-left:4px solid #555"></div>
<div class="a" style="left:565px;top:775px;width:0;height:0;border-top:3.500px solid transparent;border-bottom:3.500px solid transparent;border-left:4px solid #555"></div>
<svg style="left:407px;top:485px" width="16" height="16" viewBox="0 0 16 16"><path d="M4 .5l6.500 10.500M12 .5L5.500 11" stroke="#5a5a5a" stroke-width="1.500" fill="none"></path><circle cx="3.800" cy="12.700" r="2.500" fill="none" stroke="#2e75b6" stroke-width="1.300"></circle><circle cx="12.200" cy="12.700" r="2.500" fill="none" stroke="#2e75b6" stroke-width="1.300"></circle></svg>
<svg style="left:407px;top:511px" width="16" height="15" viewBox="0 0 16 15"><path d="M.5.500h5l2 2V9.500h-7z" fill="#fff" stroke="#5a5a5a"></path><path d="M2 3.500h3M2 5.500h3M2 7.500h3" stroke="#2e75b6" stroke-width=".9"></path><path d="M6.500 4.500h5.500l2.500 2.500V14.500h-8z" fill="#fff" stroke="#5a5a5a"></path><path d="M8.500 8.500h4M8.500 10.500h4M8.500 12.500h4" stroke="#2e75b6" stroke-width=".9"></path></svg>
<svg style="left:408px;top:533px" width="16" height="17" viewBox="0 0 16 17"><rect x="0" y="2.500" width="12" height="12.500" rx="1" fill="#eac282"></rect><path d="M3 2.500h6v2H3z" fill="#5a5a5a"></path><path d="M4.800 2.500a1.200 1.200 0 0 1 2.400 0" fill="none" stroke="#5a5a5a"></path><path d="M7.500 7.500h5l3 3v6h-8z" fill="#fff" stroke="#5a5a5a"></path><path d="M12.500 7.500v3h3" fill="none" stroke="#5a5a5a"></path></svg>
<svg style="left:433px;top:558px" width="23" height="25" viewBox="0 0 23 25"><rect x="0" y="3.500" width="18" height="18" rx="1.500" fill="#eac282"></rect><path d="M4 4h10v2.500H4z" fill="#5a5a5a"></path><path d="M7 4a2 2 0 0 1 4 0" fill="none" stroke="#5a5a5a" stroke-width="1.300"></path><path d="M10.500 10.500h6.500l4 4v10H10.500z" fill="#fff" stroke="#6a6a6a"></path><path d="M17 10.500v4h4" fill="none" stroke="#6a6a6a"></path></svg>
<svg style="left:411px;top:616px" width="14" height="14" viewBox="0 0 14 14"><circle cx="7" cy="7" r="5.800" fill="#fff" stroke="#2e75b6" stroke-width="1.500"></circle><path d="M7 6v4.500" stroke="#333" stroke-width="1.600"></path><circle cx="7" cy="3.800" r="1" fill="#333"></circle></svg>
<svg style="left:407px;top:720px" width="16" height="15" viewBox="0 0 16 15"><path d="M4.500 1.500h10.500v12H1.500V9z" fill="#f4f4f4" stroke="#b8b8b8"></path><path d="M6 4.500h7M5 7.500h8M4 10.500h9" stroke="#b8b8b8" stroke-width="1.300"></path><path d="M1 8l4-7" stroke="#b8b8b8" stroke-width="1.300"></path></svg>
<svg style="left:406px;top:796px" width="17" height="17" viewBox="0 0 17 17"><path d="M5.500 3.500h10v8h-6l-3 3v-3h-2.500V7" fill="none" stroke="#5a5a5a" stroke-width="1.100"></path><path d="M3 0v6M0 3h6" stroke="#3a9a5c" stroke-width="1.500"></path></svg>
<svg style="left:408px;top:824px" width="15" height="17" viewBox="0 0 15 17"><rect x=".5" y=".5" width="14" height="15.500" fill="#fff" stroke="#5a5a5a"></rect><rect x="0" y="0" width="15" height="2.500" fill="#2e75b6"></rect><circle cx="4.500" cy="7" r="1" fill="none" stroke="#5a5a5a" stroke-width=".9"></circle><circle cx="4.500" cy="11.500" r="1" fill="none" stroke="#5a5a5a" stroke-width=".9"></circle><path d="M7.500 7h5M7.500 11.500h5" stroke="#5a5a5a"></path></svg>
<div class="t c" style="left:400px;top:871px;width:30px;font-size:8.500px;color:#444;line-height:10px">wén</div><div class="t" style="left: 410.5px; top: 879px; width: 9px; font-size: 9px; color: rgb(46, 117, 182); line-height: 12px; font-weight: bold; text-align: justify; text-align-last: justify;">文</div>
<svg style="left:407px;top:924px" width="17" height="17" viewBox="0 0 17 17"><path d="M2.500 8a6 6 0 0 1 12 0M2.500 8h12M8.500 2v6M5.500 8c0-3 1-5 3-6 2 1 3 3 3 6" fill="none" stroke="#5a5a5a" stroke-width="1"></path><rect x="1" y="10" width="9" height="5.500" rx="2.750" fill="none" stroke="#2e75b6" stroke-width="1.700"></rect><rect x="7" y="10" width="9" height="5.500" rx="2.750" fill="none" stroke="#2e75b6" stroke-width="1.700"></rect></svg>
<!--OVERLAY-->
<svg style="left:340px;top:480px" width="120" height="180" viewBox="340 480 120 180"><defs><filter id="sh" x="-50%" y="-20%" width="200%" height="140%"><feGaussianBlur stdDeviation="1.500"></feGaussianBlur></filter></defs>
<path d="M361.300 499.800Q362 498.300 363.700 498.900L409.900 620.300 412.800 616.800 415.500 642 401.600 620.500 405.600 622Z" fill="#000" opacity=".45" filter="url(#sh)" transform="translate(-3,3)"></path>
<path d="M361.300 499.800Q362 498.300 363.700 498.900L409.900 620.300 412.800 616.800 415.500 642 401.600 620.500 405.600 622Z" fill="#f01a1a" stroke="#f01a1a" stroke-width=".8" stroke-linejoin="round"></path></svg>
<svg style="left:531px;top:649px" width="14" height="21" viewBox="0 0 14 21"><path d="M.7.800v15.500l3.600-3.400 2.700 6.300 2.400-1-2.700-6.200h5z" fill="#fff" stroke="#111" stroke-width="1.100" stroke-linejoin="round"></path></svg>
<svg style="left:1395px;top:925px" width="70" height="53" viewBox="1395 925 70 53"><g fill="#1b9fe6">
<path d="M1401.500 951.500L1439.200 930.500 1453 942.300H1441.500L1436.500 938.200 1421.500 946.500 1415.500 951.500Z"></path>
<path d="M1414.500 951L1420.500 950 1419.500 966H1413.500Z"></path>
<path d="M1421 945.500L1450.500 941.800 1449.500 945 1431 948.200 1420.500 949.300Z"></path>
<path d="M1428.500 948H1431.500L1430.500 965.500H1427.500Z"></path>
<path d="M1420 954L1431 953.300 1440 949.800 1448.500 949 1447.500 952.300 1440 953 1431 956.300 1420 957Z"></path>
<path d="M1419.500 962.500L1431 961.800 1440 958 1445.500 957.500 1444.500 960.800 1440 961.200 1431 965 1419.500 966Z"></path>
<path d="M1452.500 943.200l4.200-.5-.8 3.600-4.200.5zM1449.500 948.500l4.600-.5-1 4-4.600.5zM1458 946.500l3-.4-.7 2.800-3 .4zM1455.500 950.800l3.600-.4-.9 3.600-3.600.4zM1452 954.800l4-.5-1 4-4 .5zM1458 957.500l3.400-.4-.8 3.400-3.400.4zM1446.500 958.500l4.600-.5-1 4-4.600.5zM1451.500 963l3-.4-.5 2.200-3 .4z"></path>
</g>
<g fill="#1b9fe6" opacity=".13"><path d="M1413.500 967h7l-.5 5h-7zM1421 967h24l-2 4h-22z"></path><path d="M1447 967h5v3h-5z"></path></g></svg>
<div class="a" style="left: 1470px; top: 931px; width: 76.41px; height: 24px; font-size: 18.5px; line-height: 24px; font-weight: bold; color: rgb(46, 46, 46); letter-spacing: 0.1px; white-space: nowrap; text-align: justify; text-align-last: justify;">系统之家</div>
<div class="a" style="left:1468px;top:955px;width:82px;height:10px;font-size:7.600px;line-height:10px;font-weight:bold;color:#333;letter-spacing:.62px;white-space:nowrap">XITONGZHIJIA.NET</div>
<div class="a" style="left:1468px;top:962px;width:82px;height:10px;font-size:7.600px;line-height:10px;font-weight:bold;color:#333;letter-spacing:.62px;white-space:nowrap;transform:scaleY(-1);opacity:.13">XITONGZHIJIA.NET</div>


</body></html>
